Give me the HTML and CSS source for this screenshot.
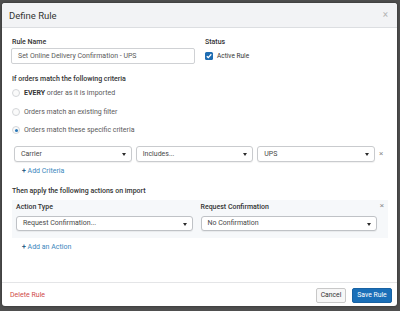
FILE: index.html
```html
<!DOCTYPE html>
<html>
<head>
<meta charset="utf-8">
<title>Define Rule</title>
<link rel="stylesheet" href="styles.css">
</head>
<body>
<div class="modal">
  <div class="modal-header">
    <span class="title">Define Rule</span>
    <span class="close">×</span>
  </div>
  <div class="modal-body">
    <div class="top-row">
      <div class="field">
        <label class="lbl">Rule Name</label>
        <div class="input">Set Online Delivery Confirmation - UPS</div>
      </div>
      <div class="field">
        <label class="lbl">Status</label>
        <div class="check-row">
          <span class="checkbox"><svg width="8" height="8" viewBox="0 0 8 8"><path d="M1.8 4.2 L3.3 5.6 L6.3 2.3" fill="none" stroke="#fff" stroke-width="1.3"/></svg></span>
          <span class="check-text">Active Rule</span>
        </div>
      </div>
    </div>

    <div class="section-title">If orders match the following criteria</div>
    <div class="radios">
      <div class="radio-row"><span class="radio"></span><span class="radio-text"><b>EVERY</b> order as it is imported</span></div>
      <div class="radio-row"><span class="radio"></span><span class="radio-text">Orders match an existing filter</span></div>
      <div class="radio-row"><span class="radio checked"></span><span class="radio-text">Orders match these specific criteria</span></div>
    </div>

    <div class="criteria-row">
      <div class="select">Carrier<span class="caret"></span></div>
      <div class="select">Includes...<span class="caret"></span></div>
      <div class="select">UPS<span class="caret"></span></div>
      <span class="remove">×</span>
    </div>
    <div class="add-link"><span class="plus">+</span> Add Criteria</div>

    <div class="section-title then">Then apply the following actions on import</div>
    <div class="action-panel">
      <div class="field">
        <label class="lbl">Action Type</label>
        <div class="select">Request Confirmation...<span class="caret"></span></div>
      </div>
      <div class="field">
        <label class="lbl">Request Confirmation</label>
        <div class="select">No Confirmation<span class="caret"></span></div>
      </div>
      <span class="remove panel-remove">×</span>
    </div>
    <div class="add-link"><span class="plus">+</span> Add an Action</div>
  </div>
  <div class="modal-footer">
    <span class="delete">Delete Rule</span>
    <div class="btns">
      <button class="btn cancel">Cancel</button>
      <button class="btn save">Save Rule</button>
    </div>
  </div>
</div>
</body>
</html>
```

FILE: styles.css
```css
* { box-sizing: border-box; }
html, body { margin: 0; padding: 0; }
body {
  width: 400px;
  height: 311px;
  overflow: hidden;
  background: #4f4f4f;
  font-family: Roboto, "Liberation Sans", Arial, sans-serif;
  font-size: 7px;
  color: #333;
}
.modal {
  margin: 3px 3px 0 2px;
  width: 395px;
  height: 303px;
  background: #fff;
  border-radius: 3px;
  box-shadow: 0 0 3px rgba(0,0,0,0.45);
  display: flex;
  flex-direction: column;
  overflow: hidden;
}
.modal-header {
  height: 25px;
  flex: none;
  background: #f2f3f5;
  border-bottom: 1px solid #dcdee1;
  display: flex;
  align-items: center;
  justify-content: space-between;
  padding: 0 9px 0 7px;
}
.title { font-size: 9.5px; color: #333; }
.close { font-size: 10px; color: #b5b5b5; line-height: 1; }

.modal-body {
  flex: 1;
  padding: 8px 9px 0 9px;
}
.top-row {
  display: grid;
  grid-template-columns: 184px 1fr;
  column-gap: 9px;
}
.lbl {
  display: block;
  line-height: 12px;
  font-weight: 500;
  color: #333;
  padding-left: 1px;
}
.input {
  height: 16px;
  border: 1px solid #cfd1d4;
  border-radius: 2px;
  padding-left: 6px;
  line-height: 14px;
  color: #5a5a5a;
  background: #fff;
}
.check-row {
  display: flex;
  align-items: center;
  height: 16px;
  padding-left: 1px;
}
.checkbox {
  width: 8px;
  height: 8px;
  border-radius: 1.5px;
  background: #1e6db3;
  display: inline-flex;
  margin-right: 4px;
}
.checkbox svg { display: block; }
.check-text { font-size: 6.5px; color: #333; }

.section-title {
  margin-top: 10px;
  line-height: 10px;
  font-weight: 500;
  padding-left: 1px;
}
.radios { padding-left: 1px; }
.radio-row {
  display: flex;
  align-items: center;
  height: 18.5px;
}
.radio {
  width: 8px;
  height: 8px;
  border-radius: 50%;
  border: 1px solid #d4d6d9;
  background: #fafafa;
  margin-right: 4px;
  display: inline-flex;
  align-items: center;
  justify-content: center;
}
.radio.checked::after {
  content: "";
  width: 3px;
  height: 3px;
  border-radius: 50%;
  background: #2a78b8;
}
.radio-text { color: #5a5a5a; }
.radio-text b { color: #333; font-weight: 700; }

.criteria-row {
  margin-top: 6.5px;
  padding-left: 3px;
  display: grid;
  grid-template-columns: 1fr 1fr 1fr 9px;
  column-gap: 4px;
  align-items: center;
}
.select {
  position: relative;
  height: 16px;
  border: 1px solid #c9cbce;
  border-radius: 3px;
  background: #fff;
  padding-left: 6px;
  line-height: 14px;
  color: #484848;
  box-shadow: 0 1px 1px rgba(0,0,0,0.06);
}
.caret {
  position: absolute;
  right: 5px;
  top: 6px;
  width: 0;
  height: 0;
  border-left: 2.5px solid transparent;
  border-right: 2.5px solid transparent;
  border-top: 3px solid #2b2b2b;
}
.remove {
  font-size: 8px;
  color: #8f8f8f;
  line-height: 1;
}
.add-link {
  margin-top: 3px;
  margin-left: 11px;
  line-height: 12px;
  color: #3a87bd;
}
.plus { color: #2c5f86; font-weight: 700; }

.section-title.then {
  margin-top: 8px;
  line-height: 12px;
}
.action-panel {
  position: relative;
  margin-top: 3px;
  margin-left: 1px;
  background: #f6f8fa;
  padding: 1px 11px 7px 4px;
  display: grid;
  grid-template-columns: 1fr 1fr;
  column-gap: 8px;
}
.action-panel .lbl { margin-bottom: 3px; padding-left: 0; }
.action-panel .select { height: 15px; line-height: 13px; border-color: #bfc2c6; }
.action-panel .caret { top: 5.5px; }
.panel-remove {
  position: absolute;
  right: 4px;
  top: 2px;
  color: #8f8f8f;
}

.modal-footer {
  flex: none;
  height: 24px;
  border-top: 1px solid #e4e5e7;
  display: flex;
  align-items: center;
  justify-content: space-between;
  padding: 1px 5px 0 8px;
}
.delete { color: #cf4a4a; }
.btns { display: flex; gap: 6px; }
.btn {
  font-family: inherit;
  font-size: 6.8px;
  height: 15px;
  padding: 0;
  border-radius: 2px;
  cursor: pointer;
}
.cancel {
  width: 30px;
  background: #f7f7f7;
  border: 1px solid #c8c8c8;
  color: #333;
}
.save {
  width: 40px;
  background: #1a6fb8;
  border: 1px solid #1862a3;
  color: #fff;
}
```
